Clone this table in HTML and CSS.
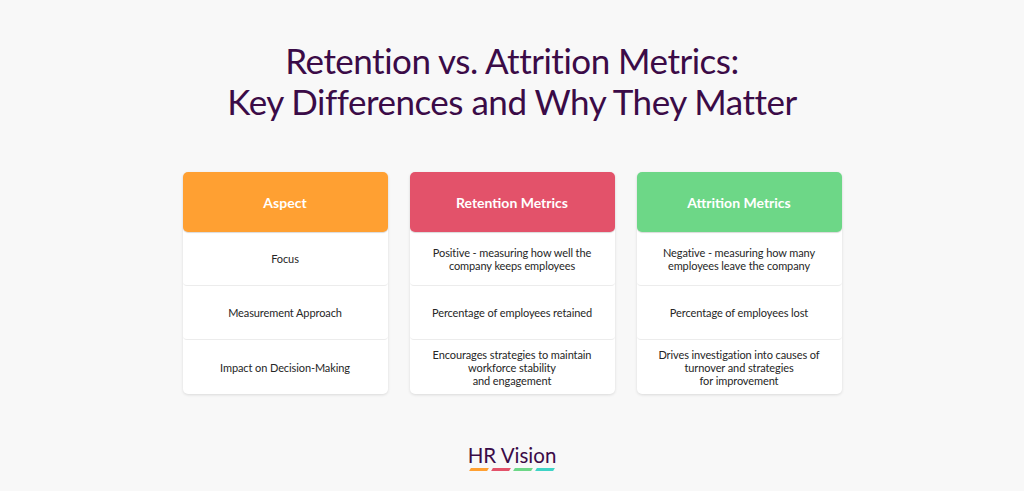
FILE: index.html
```html
<!DOCTYPE html>
<html lang="en">
<head>
<meta charset="utf-8">
<title>Retention vs. Attrition Metrics</title>
<link rel="stylesheet" href="styles.css">
</head>
<body>
<main class="page">
  <h1 class="title">Retention vs. Attrition Metrics:<br>Key Differences and Why They Matter</h1>
  <section class="table">
    <div class="col">
      <div class="head head-orange">Aspect</div>
      <div class="cell">Focus</div>
      <div class="cell">Measurement Approach</div>
      <div class="cell">Impact on Decision-Making</div>
    </div>
    <div class="col">
      <div class="head head-red">Retention Metrics</div>
      <div class="cell">Positive - measuring how well the<br>company keeps employees</div>
      <div class="cell">Percentage of employees retained</div>
      <div class="cell">Encourages strategies to maintain<br>workforce stability<br>and engagement</div>
    </div>
    <div class="col">
      <div class="head head-green">Attrition Metrics</div>
      <div class="cell">Negative - measuring how many<br>employees leave the company</div>
      <div class="cell">Percentage of employees lost</div>
      <div class="cell">Drives investigation into causes of<br>turnover and strategies<br>for improvement</div>
    </div>
  </section>
  <footer class="logo">
    <span class="logo-text">HR Vision</span>
    <span class="dashes">
      <i class="dash d1"></i><i class="dash d2"></i><i class="dash d3"></i><i class="dash d4"></i>
    </span>
  </footer>
</main>
</body>
</html>
```

FILE: styles.css
```css
* { box-sizing: border-box; }
html, body { margin: 0; padding: 0; }
body {
  background: #f8f8f8;
  font-family: Lato, "Open Sans", sans-serif;
  width: 1024px;
  height: 491px;
  overflow: hidden;
}
.page {
  display: flex;
  flex-direction: column;
  align-items: center;
  padding-top: 40px;
}
.title {
  margin: 0;
  font-weight: 400;
  font-size: 35px;
  line-height: 41px;
  color: #3b0b47;
  text-align: center;
  letter-spacing: -0.5px;
}
.table {
  display: flex;
  gap: 22px;
  margin-top: 50px;
}
.col {
  width: 205px;
  display: flex;
  flex-direction: column;
  background: #ffffff;
  border-radius: 5px;
  box-shadow: 0 1px 3px rgba(0,0,0,0.12);
}
.head {
  height: 60px;
  display: flex;
  align-items: center;
  justify-content: center;
  color: #ffffff;
  font-size: 14px;
  font-weight: 700;
  border-radius: 5px;
  box-shadow: 0 1px 1px rgba(0,0,0,0.15);
}
.head-orange { background: #ffa032; }
.head-red { background: #e3526a; }
.head-green { background: #6dd787; }
.cell {
  height: 54px;
  display: flex;
  align-items: center;
  justify-content: center;
  text-align: center;
  font-size: 11px;
  line-height: 13px;
  color: #262626;
  border-bottom: 1px solid #ececec;
  border-radius: 0 0 4px 4px;
  letter-spacing: -0.1px;
}
.cell:last-child { border-bottom: none; }
.logo {
  margin-top: 50px;
  display: flex;
  flex-direction: column;
  align-items: center;
}
.logo-text {
  font-size: 20.5px;
  line-height: 22px;
  color: #3b0b47;
  font-weight: 400;
}
.dashes {
  display: flex;
  gap: 4px;
  margin-top: 2px;
}
.dash {
  display: block;
  width: 18px;
  height: 3px;
  transform: skewX(-30deg);
}
.d1 { background: #ffa032; }
.d2 { background: #e3526a; }
.d3 { background: #6dd787; }
.d4 { background: #3ed3c6; }
```
